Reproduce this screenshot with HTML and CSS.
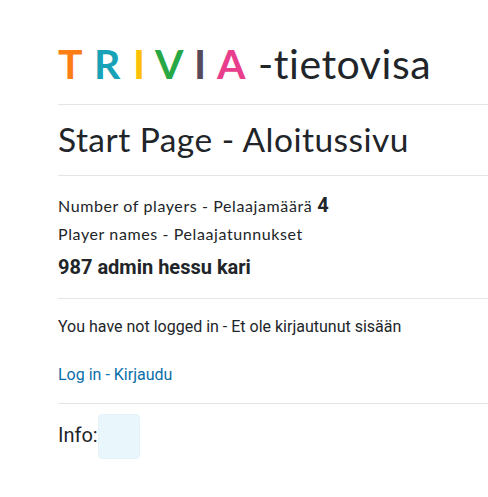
FILE: index.html
```
<!DOCTYPE html>
<html lang="fi">
<head>
<meta charset="utf-8">
<title>Trivia</title>
<link rel="stylesheet" href="styles.css">
</head>
<body>
<main class="page">
  <h1 class="title"><b class="orange">T</b><b class="teal">R</b><b class="yellow">I</b><b class="green">V</b><b class="dark">I</b><b class="pink">A</b><span class="suffix">-tietovisa</span></h1>
  <h2 class="subtitle">Start Page - Aloitussivu</h2>
  <section class="players">
    <h3 class="label"><span>Number of players - Pelaajamäärä</span><b class="count">4</b></h3>
    <h3 class="label"><span>Player names - Pelaajatunnukset</span></h3>
    <p class="names">987 admin hessu kari</p>
  </section>
  <section class="login">
    <p>You have not logged in - Et ole kirjautunut sisään</p>
    <a href="#">Log in - Kirjaudu</a>
  </section>
  <section class="info"><span>Info:</span><span class="alert"></span></section>
</main>
</body>
</html>
```
FILE: styles.css
```
* { box-sizing: border-box; }
body {
  margin: 0;
  background: #fff;
  color: #212529;
  font: 16px/24px Roboto, sans-serif;
  overflow: hidden;
}
.page { padding: 40px 0 0 58px; }
h1, h2, h3, p { margin: 0; font-weight: 400; }
.title, .subtitle, .label { font-family: Lato, sans-serif; white-space: nowrap; }
.title {
  display: grid;
  grid-template-columns: 36px 39px 22px 39px 22px 42px auto;
  height: 65px;
  font-size: 41px;
  line-height: 48px;
  border-bottom: 1px solid #e5e5e5;
}
.title .pink { margin-left: 1px; }
.orange { color: #fd7e14; }
.teal { color: #17a2b8; }
.yellow { color: #ffc107; }
.green { color: #28a745; }
.dark { color: #55495a; }
.pink { color: #e83e8c; }
.suffix { letter-spacing: 0.55px; }
.subtitle {
  height: 71px;
  padding-top: 15px;
  font-size: 33.5px;
  line-height: 39px;
  letter-spacing: 0.47px;
  border-bottom: 1px solid #e5e5e5;
}
.players {
  height: 123px;
  padding-top: 17px;
  border-bottom: 1px solid #e5e5e5;
}
.label {
  display: flex;
  height: 28px;
  font-size: 16px;
  line-height: 26px;
  letter-spacing: 0.6px;
}
.count { margin-left: 5px; font: 700 20px/25px Roboto, sans-serif; letter-spacing: 0; }
.names { font-size: 20px; font-weight: 700; line-height: 24px; margin-top: 6px; }
.login {
  display: flex;
  flex-direction: column;
  gap: 24px;
  height: 105px;
  padding-top: 16px;
  border-bottom: 1px solid #e5e5e5;
}
.login a { color: #0a6ea9; text-decoration: none; }
.info { display: flex; padding-top: 10px; font-size: 20px; line-height: 42px; }
.alert {
  width: 42px;
  height: 45px;
  background: #e9f6fb;
  border: 1px solid #e3f3f9;
  border-radius: 4px;
}
```
